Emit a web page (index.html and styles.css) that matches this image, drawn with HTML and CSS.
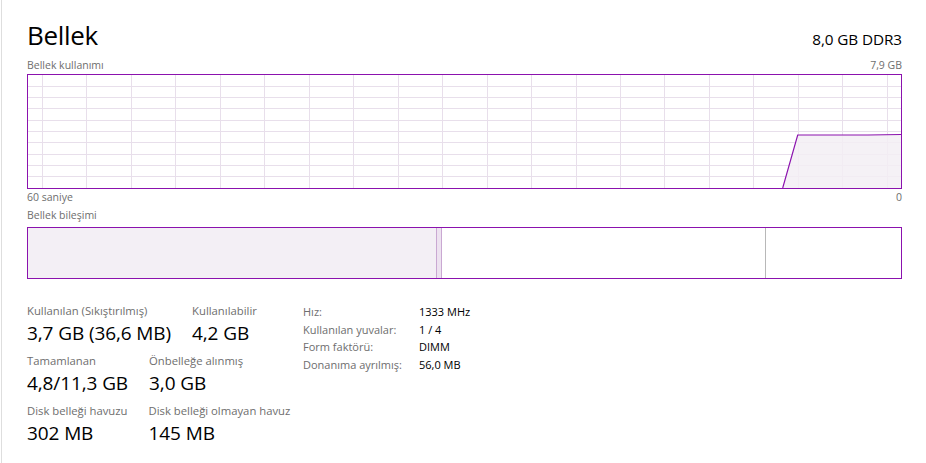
FILE: index.html
```html
<!DOCTYPE html>
<html lang="tr">
<head>
<meta charset="utf-8">
<title>Bellek</title>
<link rel="stylesheet" href="styles.css">
</head>
<body>
<div class="app">
  <div class="content">
    <div class="header">
      <div class="title">Bellek</div>
      <div class="spec">8,0 GB DDR3</div>
    </div>
    <div class="caption-row first">
      <span>Bellek kullanımı</span>
      <span>7,9 GB</span>
    </div>
    <div class="chart">
      <svg width="873" height="113" viewBox="0 0 873 113">
        <g class="grid" stroke="#e8dfeb" stroke-width="1" shape-rendering="crispEdges">
          <line x1="14.5" y1="0" x2="14.5" y2="113"/>
          <line x1="58.5" y1="0" x2="58.5" y2="113"/>
          <line x1="103.5" y1="0" x2="103.5" y2="113"/>
          <line x1="147.5" y1="0" x2="147.5" y2="113"/>
          <line x1="192.5" y1="0" x2="192.5" y2="113"/>
          <line x1="236.5" y1="0" x2="236.5" y2="113"/>
          <line x1="281.5" y1="0" x2="281.5" y2="113"/>
          <line x1="325.5" y1="0" x2="325.5" y2="113"/>
          <line x1="370.5" y1="0" x2="370.5" y2="113"/>
          <line x1="414.5" y1="0" x2="414.5" y2="113"/>
          <line x1="459.5" y1="0" x2="459.5" y2="113"/>
          <line x1="503.5" y1="0" x2="503.5" y2="113"/>
          <line x1="548.5" y1="0" x2="548.5" y2="113"/>
          <line x1="592.5" y1="0" x2="592.5" y2="113"/>
          <line x1="636.5" y1="0" x2="636.5" y2="113"/>
          <line x1="681.5" y1="0" x2="681.5" y2="113"/>
          <line x1="725.5" y1="0" x2="725.5" y2="113"/>
          <line x1="770.5" y1="0" x2="770.5" y2="113"/>
          <line x1="814.5" y1="0" x2="814.5" y2="113"/>
          <line x1="859.5" y1="0" x2="859.5" y2="113"/>
          <line x1="0" y1="11.5" x2="873" y2="11.5"/>
          <line x1="0" y1="22.5" x2="873" y2="22.5"/>
          <line x1="0" y1="33.5" x2="873" y2="33.5"/>
          <line x1="0" y1="45.5" x2="873" y2="45.5"/>
          <line x1="0" y1="56.5" x2="873" y2="56.5"/>
          <line x1="0" y1="67.5" x2="873" y2="67.5"/>
          <line x1="0" y1="79.5" x2="873" y2="79.5"/>
          <line x1="0" y1="90.5" x2="873" y2="90.5"/>
          <line x1="0" y1="101.5" x2="873" y2="101.5"/>
        </g>
        <polygon points="754.7,113 769.7,60 840,60 873,59.5 873,113" fill="#f3eff5" fill-opacity="0.85"/>
        <polyline points="754.7,113 769.7,60 840,60 873,59.5" fill="none" stroke="#8b12ae" stroke-width="1.2"/>
      </svg>
    </div>
    <div class="caption-row">
      <span>60 saniye</span>
      <span>0</span>
    </div>
    <div class="caption-row second">
      <span>Bellek bileşimi</span>
    </div>
    <div class="composition">
      <div class="seg inuse"></div>
      <div class="seg modified"></div>
      <div class="seg standby"></div>
      <div class="seg free"></div>
    </div>
    <div class="stats">
      <div class="stat-block">
        <div class="stat-row">
          <div class="stat">
            <div class="stat-label">Kullanılan (Sıkıştırılmış)</div>
            <div class="stat-value">3,7 GB (36,6 MB)</div>
          </div>
          <div class="stat">
            <div class="stat-label">Kullanılabilir</div>
            <div class="stat-value">4,2 GB</div>
          </div>
        </div>
        <div class="stat-row">
          <div class="stat">
            <div class="stat-label">Tamamlanan</div>
            <div class="stat-value">4,8/11,3 GB</div>
          </div>
          <div class="stat">
            <div class="stat-label">Önbelleğe alınmış</div>
            <div class="stat-value">3,0 GB</div>
          </div>
        </div>
        <div class="stat-row">
          <div class="stat">
            <div class="stat-label">Disk belleği havuzu</div>
            <div class="stat-value">302 MB</div>
          </div>
          <div class="stat">
            <div class="stat-label">Disk belleği olmayan havuz</div>
            <div class="stat-value">145 MB</div>
          </div>
        </div>
      </div>
      <div class="props">
        <div class="prop"><span class="prop-name">Hız:</span><span class="prop-val">1333 MHz</span></div>
        <div class="prop"><span class="prop-name">Kullanılan yuvalar:</span><span class="prop-val">1 / 4</span></div>
        <div class="prop"><span class="prop-name">Form faktörü:</span><span class="prop-val">DIMM</span></div>
        <div class="prop"><span class="prop-name">Donanıma ayrılmış:</span><span class="prop-val">56,0 MB</span></div>
      </div>
    </div>
  </div>
</div>
</body>
</html>
```
FILE: styles.css
```css
html, body {
  margin: 0;
  padding: 0;
  background: #ffffff;
}
body {
  font-family: "Open Sans", "Noto Sans", sans-serif;
  color: #000000;
  width: 926px;
  height: 463px;
  overflow: hidden;
}
.app {
  margin-left: 1px;
  border-left: 1px solid #dedede;
  height: 463px;
}
.content {
  margin-left: 25px;
  width: 875px;
}
.header {
  display: flex;
  justify-content: space-between;
  align-items: baseline;
  padding-top: 20px;
  height: 30px;
}
.title {
  font-size: 26px;
  line-height: 30px;
  letter-spacing: -0.3px;
}
.spec {
  font-size: 15.3px;
  line-height: 30px;
  letter-spacing: -0.1px;
}
.caption-row {
  display: flex;
  justify-content: space-between;
  font-size: 10.5px;
  line-height: 14px;
  height: 14px;
  color: #6e6e6e;
  margin-top: 1px;
}
.caption-row.first {
  margin-top: 8px;
  margin-bottom: 2px;
}
.caption-row.second {
  margin-top: 4px;
  margin-bottom: 5px;
}
.chart {
  border: 1px solid #8b12ae;
  height: 113px;
  width: 873px;
}
.chart svg {
  display: block;
}
.composition {
  display: flex;
  border: 1px solid #8b12ae;
  height: 50px;
  width: 873px;
}
.seg {
  height: 100%;
}
.inuse {
  width: 408px;
  background: #f3eff5;
}
.modified {
  width: 4px;
  background: #ede2f0;
  border-left: 1px solid #c9a8d2;
  border-right: 1px solid #c9a8d2;
}
.standby {
  width: 323px;
  border-right: 1px solid #b8b8b8;
}
.free {
  flex: 1;
}
.stats {
  display: flex;
  margin-top: 24px;
}
.stat-block {
  width: 276px;
  display: flex;
  flex-direction: column;
  gap: 7px;
}
.stat-row {
  display: flex;
  gap: 21px;
}
.stat-label {
  font-size: 11.3px;
  line-height: 16px;
  color: #6e6e6e;
}
.stat-value {
  font-size: 19px;
  line-height: 25px;
  margin-top: 2px;
  letter-spacing: -0.1px;
}
.props {
  display: flex;
  flex-direction: column;
}
.prop {
  display: flex;
  font-size: 11px;
  line-height: 17.5px;
}
.prop-name {
  width: 116px;
  color: #6e6e6e;
}
.prop-val {
  color: #000000;
}
```
